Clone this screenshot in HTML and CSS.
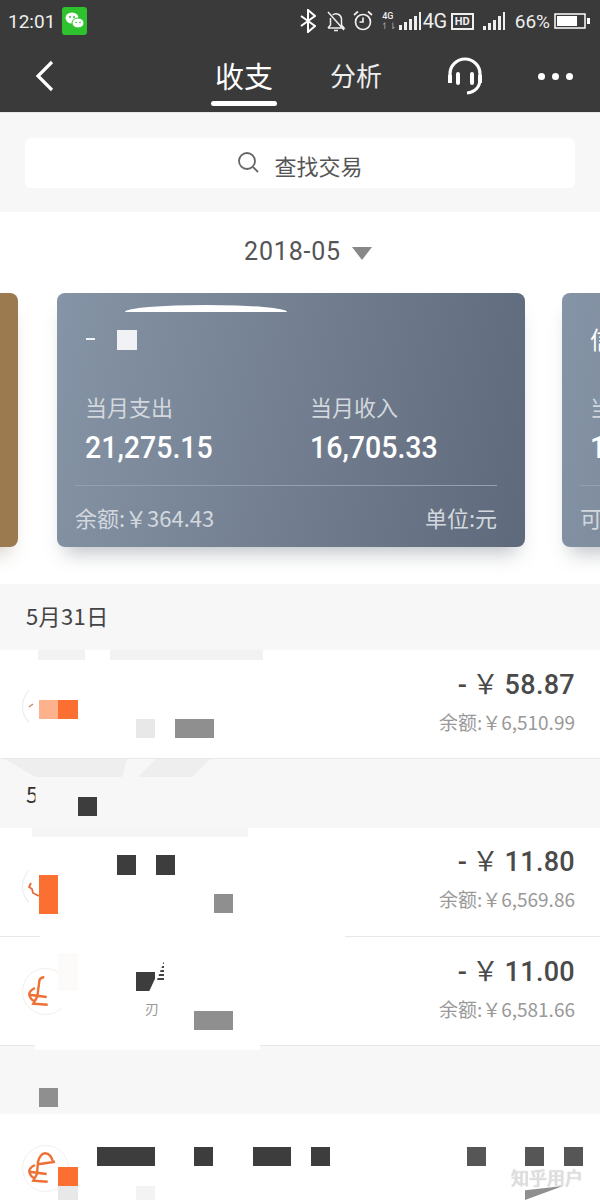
FILE: index.html
```html
<!DOCTYPE html>
<html lang="zh-CN">
<head>
  <meta charset="UTF-8">
  <title>收支</title>
  <link rel="stylesheet" href="styles.css">
</head>
<body>
  <div class="top">
    <div class="status">
      <span class="time">12:01</span>
      <svg class="wechat" width="25" height="28" viewBox="0 0 25 28">
        <rect width="25" height="28" rx="3" fill="#2fc22f"/>
        <ellipse cx="10" cy="11" rx="6.500" ry="5.500" fill="#fff"/>
        <ellipse cx="16" cy="16" rx="6" ry="5" fill="#fff" stroke="#2fc22f"/>
        <circle cx="8" cy="10" r="1" fill="#2fc22f"/><circle cx="12" cy="10" r="1" fill="#2fc22f"/>
        <circle cx="14" cy="15.500" r=".8" fill="#2fc22f"/><circle cx="18" cy="15.500" r=".8" fill="#2fc22f"/>
      </svg>
      <div class="status-right">
        <svg width="16" height="24" viewBox="0 0 16 24" fill="none" stroke="#fff" stroke-width="2"><path d="M1 7l14 10-7 6V1l7 6L1 17"/></svg>
        <svg class="ml10" width="20" height="24" viewBox="0 0 20 24" fill="none" stroke="#eee" stroke-width="1.500"><path d="M2 19h16l-2.500-3V10a5.500 5.500 0 0 0-9-4M4.500 9v7L2 19M8 21.500h4M2 3l16 18"/></svg>
        <svg class="ml7" width="20" height="24" viewBox="0 0 20 24" fill="none" stroke="#eee" stroke-width="1.700"><circle cx="10" cy="13" r="7.500"/><path d="M10 8.500V13h-3.500M1 6l4-3.500M19 6l-4-3.500"/></svg>
        <span class="net-small">4G<br><i>↿⇂</i></span>
        <svg width="22" height="24" viewBox="0 0 22 24" fill="#eee"><rect x="0" y="16" width="3" height="5"/><rect x="5" y="13" width="3" height="8"/><rect x="10" y="10" width="3" height="11"/><rect x="15" y="7" width="3" height="14"/><rect x="20" y="3" width="2" height="18"/></svg>
        <span class="net">4G</span>
        <span class="hd">HD</span>
        <svg class="ml9" width="22" height="24" viewBox="0 0 22 24" fill="#eee"><rect x="0" y="17" width="3" height="4"/><rect x="5" y="14" width="3" height="7"/><rect x="10" y="11" width="3" height="10"/><rect x="15" y="7" width="3" height="14"/><rect x="20" y="3" width="2" height="18"/></svg>
        <span class="pct">66%</span>
        <svg width="36" height="16" viewBox="0 0 36 16"><rect x="1" y="1" width="30" height="14" fill="none" stroke="#fff" stroke-width="1.500"/><rect x="3" y="3" width="20" height="10" fill="#fff"/><rect x="33" y="5" width="3" height="6" fill="#fff"/></svg>
      </div>
    </div>
    <div class="nav">
      <svg class="back" width="20" height="32" viewBox="0 0 20 32" fill="none" stroke="#fff" stroke-width="3.200"><path d="M17 2L3 16l14 14"/></svg>
      <div class="tab active">收支</div>
      <div class="tab">分析</div>
      <svg class="headset" width="36" height="38" viewBox="0 0 36 38" fill="none" stroke="#fff" stroke-width="3.200"><path d="M3 20V17a15 15 0 0 1 30 0v5c0 8-5 13-13 14"/><path d="M3 18v8M33 18v8" stroke-width="4"/><path d="M11 17v9M25 17v9" stroke-width="4" stroke-linecap="round"/></svg>
      <div class="dots"><b></b><b></b><b></b></div>
    </div>
  </div>

  <div class="search-wrap">
    <div class="search">
      <svg width="24" height="24" viewBox="0 0 24 24" fill="none" stroke="#666" stroke-width="1.800"><circle cx="10" cy="10" r="8"/><path d="M16 16l5 5"/></svg>
      <span>查找交易</span>
    </div>
  </div>

  <div class="month-area">
    <div class="month">2018-05<i class="caret"></i></div>
    <div class="cards">
      <div class="card brown"></div>
      <div class="card">
        <div class="smear"></div>
        <div class="card-name"><span class="dash"></span><span class="card-sq"></span></div>
        <div class="totals">
          <div class="col"><label>当月支出</label><strong>21,275.15</strong></div>
          <div class="col"><label>当月收入</label><strong>16,705.33</strong></div>
        </div>
        <div class="card-foot"><span>余额:￥364.43</span><span>单位:元</span></div>
      </div>
      <div class="card">
        <div class="card-name name-right">信</div>
        <div class="totals">
          <div class="col"><label>当月支出</label><strong>16,705.33</strong></div>
        </div>
        <div class="card-foot"><span>可用额度</span></div>
      </div>
    </div>
  </div>

  <div class="day">5月31日<i class="patch p-a"></i><i class="patch p-b"></i></div>
  <div class="row">
    <div class="logo faint logo-a">
      <svg width="47" height="47" viewBox="0 0 47 47" fill="none" stroke="#c98a63" stroke-width="1.500"><path d="M7 24l4-3"/></svg>
    </div>
    <i class="mos peach m1"></i><i class="mos orange m2"></i><i class="mos pale m3"></i><i class="mos grey m4"></i>
    <div class="money"><div class="amount"><em>-</em><em>￥</em>58.87</div><div class="bal">余额:￥6,510.99</div></div>
  </div>
  <div class="day day2"><span class="clip5">5</span><i class="mos dark m5"></i><i class="patch p-c"></i><i class="patch p-d"></i></div>
  <div class="row row-wiped">
    <i class="patch p-e"></i>
    <div class="logo faint logo-b">
      <svg width="47" height="47" viewBox="0 0 47 47" fill="none" stroke="#e8683a" stroke-width="1.800"><path d="M9 20l-2 4 3 2 1 4 6 3"/></svg>
    </div>
    <i class="mos dark m6"></i><i class="mos dark m7"></i><i class="mos orange m8"></i><i class="mos grey m9"></i>
    <div class="money"><div class="amount"><em>-</em><em>￥</em>11.80</div><div class="bal">余额:￥6,569.86</div></div>
    <i class="wipe wipe-b"></i>
  </div>
  <div class="row">
    <div class="logo half">
      <svg width="47" height="47" viewBox="0 0 47 47" fill="none" stroke="#ee7035" stroke-width="2.400"><path d="M22.300 9c-3 .5-5 2-5 4.500l-2 15-4 7.200 14.400 1M13 20c-4 2-6 4.500-5.700 6.700.3 3 3 6 5.700 6.700M7.300 26.700l17.400 2.300"/></svg>
    </div>
    <i class="mos ghost m23"></i>
    <i class="mos dark m10 cut"></i><i class="mos grey m11"></i>
    <i class="hatch"></i><span class="frag">刃</span>
    <div class="money"><div class="amount"><em>-</em><em>￥</em>11.00</div><div class="bal">余额:￥6,581.66</div></div>
    <i class="wipe"></i>
  </div>
  <div class="day day3"><i class="mos grey m12"></i></div>
  <div class="row last">
    <div class="logo">
      <svg width="47" height="47" viewBox="0 0 47 47" fill="none" stroke="#ee7035" stroke-width="2.400"><path d="M15 29l1-12c1-5 4-8.700 7-8.700 4 0 7 4 8.300 10M16.300 19.300L33 16.700M15 29l-3.700 6.700 14.400 1M13 20c-4 2-6 4.500-5.700 6.700.3 3 3 6 5.700 6.700M7.300 26.700l17.400 2.300"/></svg>
    </div>
    <i class="mos dark m13"></i><i class="mos dark m14"></i><i class="mos dark m15"></i><i class="mos dark m16"></i>
    <i class="mos mid m17"></i><i class="mos mid m18"></i><i class="mos mid m19"></i>
    <i class="mos orange m20"></i><i class="mos pale m21"></i><i class="mos paler m22"></i><i class="wedge"></i>
    <span class="mark">知乎用户</span>
  </div>
</body>
</html>
```

FILE: styles.css
```css
* {
  box-sizing: border-box;
}
html, body {
  margin: 0;
  padding: 0;
}
body {
  width: 600px;
  height: 1200px;
  overflow: hidden;
  background-color: #fff;
  font-family: "Noto Sans CJK SC", "Liberation Sans", sans-serif;
  color: #444;
}
i, em {
  font-style: normal;
}

.top {
  height: 113px;
  background-color: #3a3a3a;
  color: #fff;
  border-bottom: 1px solid #e8e8e8;
}
.status {
  height: 40px;
  display: flex;
  align-items: center;
  padding: 2px 10px 0 8px;
}
.time {
  font-family: "Roboto", sans-serif;
  font-size: 19px;
  color: #eee;
}
.wechat {
  margin-left: 7px;
}
.status-right {
  margin-left: auto;
  display: flex;
  align-items: center;
  font-family: "Roboto", sans-serif;
  color: #eee;
}
.ml10 {
  margin-left: 10px;
}
.ml7 {
  margin-left: 7px;
}
.ml9 {
  margin-left: 9px;
}
.net-small {
  width: 14px;
  margin: 0 4px 0 8px;
  font-size: 9px;
  line-height: 10px;
  text-align: center;
  font-weight: 500;
}
.net-small i {
  color: #aaa;
}
.net {
  margin-left: 2px;
  font-size: 20px;
  letter-spacing: -0.5px;
}
.hd {
  margin-left: 4px;
  width: 23px;
  height: 17px;
  border: 2px solid #eee;
  font-size: 11px;
  font-weight: 700;
  line-height: 13px;
  text-align: center;
}
.pct {
  margin: 0 4px 0 10px;
  font-size: 19px;
}

.nav {
  height: 72px;
  display: flex;
  align-items: flex-start;
  padding-left: 35px;
}
.back {
  margin-top: 20px;
}
.tab {
  position: relative;
  margin-top: 14px;
  font-size: 26px;
  line-height: 42px;
  margin-left: 57px;
  color: #eee;
}
.tab.active {
  margin-left: 160px;
  font-size: 29px;
  color: #fff;
}
.tab.active::after {
  content: "";
  position: absolute;
  left: -4px;
  right: -4px;
  top: 47px;
  height: 5px;
  border-radius: 3px;
  background-color: #fff;
}
.headset {
  margin: 17px 0 0 65px;
}
.dots {
  margin: 33px 0 0 55px;
  display: flex;
  gap: 7px;
}
.dots b {
  width: 7px;
  height: 7px;
  border-radius: 50%;
  background-color: #fff;
}

.search-wrap {
  height: 99px;
  padding: 25px 25px 0;
  background-color: #f7f7f7;
}
.search {
  height: 50px;
  border-radius: 6px;
  background-color: #fff;
  display: flex;
  align-items: center;
  justify-content: center;
  gap: 13px;
  font-size: 22px;
  color: #555;
  padding-top: 3px;
}
.search svg {
  margin-top: -3px;
}

.month-area {
  height: 372px;
  background-color: #fff;
  overflow: hidden;
}
.month {
  height: 81px;
  padding: 0 0 3px 16px;
  display: flex;
  justify-content: center;
  align-items: center;
  font-family: "Roboto", sans-serif;
  font-size: 25px;
  letter-spacing: 0.8px;
  color: #555;
}
.caret {
  margin: 4px 0 0 11px;
  border-left: 10px solid transparent;
  border-right: 10px solid transparent;
  border-top: 13px solid #888;
}
.cards {
  display: flex;
  gap: 37px;
  margin-left: -450px;
  height: 290px;
}
.card {
  position: relative;
  flex: none;
  width: 468px;
  height: 254px;
  padding: 0 28px 0 18px;
  border-radius: 8px;
  color: #fff;
  background: linear-gradient(100deg, #8594a6 0%, #737f90 50%, #5e6a7b 100%);
  box-shadow: 0 14px 18px -8px rgba(70, 80, 95, 0.35);
}
.card.brown {
  margin-right: 2px;
  background: linear-gradient(90deg, #a5845c, #9b7a50);
  box-shadow: 0 14px 18px -8px rgba(110, 90, 60, 0.3);
}
.smear {
  position: absolute;
  left: 68px;
  top: 12px;
  width: 162px;
  height: 7px;
  background-color: #fff;
  border-radius: 50% 50% 0 0 / 100% 100% 0 0;
}
.card-name {
  height: 94px;
  padding: 37px 0 0 11px;
  display: flex;
  align-items: flex-start;
}
.name-right {
  font-size: 24px;
  padding-top: 28px;
  padding-left: 10px;
}
.dash {
  width: 9px;
  height: 2px;
  margin-top: 8px;
  background-color: #f0f2f5;
}
.card-sq {
  width: 20px;
  height: 20px;
  margin: 0 0 0 22px;
  background-color: #f0f2f5;
}
.totals {
  display: flex;
  height: 99px;
  padding-left: 10px;
  border-bottom: 1px solid #93a0b0;
}
.col {
  width: 225px;
  flex: none;
}
.col label {
  display: block;
  font-size: 22px;
  line-height: 30px;
  margin-top: 4px;
  color: #d3d8de;
}
.col strong {
  display: block;
  font-family: "Roboto", sans-serif;
  font-weight: 500;
  font-size: 31px;
  line-height: 40px;
  margin-top: 7px;
  color: #fff;
  transform: scaleX(0.92);
  transform-origin: left center;
}
.card-foot {
  display: flex;
  justify-content: space-between;
  padding-top: 15px;
  font-size: 22px;
  line-height: 32px;
  color: #d3d8de;
}

.day {
  position: relative;
  height: 66px;
  padding: 14px 0 0 26px;
  background-color: #f7f7f7;
  font-size: 22px;
  line-height: 34px;
  letter-spacing: 0.4px;
  color: #444;
}
.day2 {
  height: 69px;
  overflow: hidden;
}
.day3 {
  height: 68px;
}
.clip5 {
  position: absolute;
  left: 26px;
  top: 17px;
  clip-path: inset(0 25% 0 0);
  color: #333;
}
.patch {
  position: absolute;
  background-color: #f2f2f2;
}
.p-a {
  left: 38px;
  top: 66px;
  width: 47px;
  height: 10px;
  z-index: 1;
}
.p-b {
  left: 110px;
  top: 66px;
  width: 153px;
  height: 10px;
  z-index: 1;
}
.p-c {
  left: 5px;
  top: 0;
  width: 122px;
  height: 18px;
  background-color: #eeeeee;
  clip-path: polygon(0 0, 100% 0, 96% 100%, 25% 100%);
}
.p-d {
  left: 138px;
  top: 0;
  width: 72px;
  height: 18px;
  background-color: #eeeeee;
  clip-path: polygon(25% 0, 100% 0, 75% 100%, 0 100%);
}
.p-e {
  left: 32px;
  top: 0;
  width: 216px;
  height: 9px;
  background-color: #f5f5f5;
}

.row {
  position: relative;
  height: 109px;
  background-color: #fff;
  border-bottom: 1px solid #e8e8e8;
}
.row.last {
  height: 86px;
  border-bottom: 0;
}
.logo {
  position: absolute;
  left: 22px;
  top: 31px;
  width: 47px;
  height: 47px;
  border-radius: 50%;
  border: 1px solid #f2f0ee;
}
.logo svg {
  display: block;
  margin: -1px;
}
.logo.faint {
  border-color: transparent;
  border-left-color: #e6ecf2;
}
.logo-a {
  top: 33px;
}
.logo-b {
  top: 35px;
}
.logo.half {
  border-right-color: transparent;
  border-top-color: #f2f0ee;
}
.money {
  position: absolute;
  right: 25px;
  top: 15px;
  text-align: right;
}
.row-wiped .money {
  top: 14px;
}
.amount {
  font-family: "Roboto", sans-serif;
  font-weight: 500;
  font-size: 27px;
  line-height: 40px;
  letter-spacing: 0.3px;
  color: #4a4a4a;
  display: flex;
  justify-content: flex-end;
  align-items: center;
}
.amount em {
  margin-right: 5px;
}
.bal {
  margin-top: 1px;
  font-size: 19px;
  line-height: 32px;
  color: #999;
}
.wipe {
  position: absolute;
  left: 35px;
  right: 340px;
  bottom: -5px;
  height: 5px;
  background-color: #fff;
  z-index: 1;
}
.wipe-b {
  left: 40px;
  right: 255px;
  bottom: -1px;
  height: 1px;
}

/* mosaic blocks covering private details */
.mos {
  position: absolute;
  display: block;
}
.peach {
  background-color: #fdb18d;
}
.orange {
  background-color: #fb7030;
}
.pale {
  background-color: #e8e8e8;
}
.paler {
  background-color: #f3f3f3;
}
.ghost {
  background-color: #fdfbf9;
}
.grey {
  background-color: #8f8f8f;
}
.dark {
  background-color: #3d3d3d;
}
.mid {
  background-color: #565656;
}
.cut {
  clip-path: polygon(0 0, 100% 0, 100% 35%, 70% 100%, 0 100%);
}
.hatch {
  position: absolute;
  left: 157px;
  top: 24px;
  width: 7px;
  height: 19px;
  background: repeating-linear-gradient(0deg, #444 0 2px, transparent 2px 4px);
  clip-path: polygon(100% 0, 100% 100%, 0 100%);
}
.frag {
  position: absolute;
  left: 145px;
  top: 62px;
  font-size: 14px;
  line-height: 18px;
  color: #999;
}
.m1 { left: 39px; top: 50px; width: 19px; height: 19px; }
.m2 { left: 58px; top: 50px; width: 20px; height: 19px; }
.m3 { left: 136px; top: 69px; width: 19px; height: 19px; }
.m4 { left: 175px; top: 69px; width: 39px; height: 19px; }
.m5 { left: 78px; top: 38px; width: 19px; height: 19px; }
.m6 { left: 117px; top: 27px; width: 19px; height: 20px; }
.m7 { left: 156px; top: 27px; width: 19px; height: 20px; }
.m8 { left: 39px; top: 47px; width: 19px; height: 39px; }
.m9 { left: 214px; top: 66px; width: 19px; height: 19px; }
.m10 { left: 136px; top: 35px; width: 19px; height: 19px; }
.m11 { left: 194px; top: 74px; width: 39px; height: 19px; }
.m12 { left: 39px; top: 42px; width: 19px; height: 19px; }
.m13 { left: 97px; top: 33px; width: 58px; height: 19px; }
.m14 { left: 194px; top: 33px; width: 19px; height: 19px; }
.m15 { left: 253px; top: 33px; width: 38px; height: 19px; }
.m16 { left: 311px; top: 33px; width: 19px; height: 19px; }
.m17 { left: 467px; top: 33px; width: 19px; height: 19px; }
.m18 { left: 525px; top: 33px; width: 19px; height: 19px; }
.m19 { left: 564px; top: 33px; width: 19px; height: 19px; }
.m20 { left: 58px; top: 53px; width: 20px; height: 19px; }
.m21 { left: 58px; top: 72px; width: 20px; height: 14px; }
.m22 { left: 136px; top: 72px; width: 19px; height: 14px; }
.m23 { left: 58px; top: 16px; width: 20px; height: 38px; }
.wedge {
  position: absolute;
  left: 525px;
  top: 72px;
  width: 38px;
  height: 14px;
  background-color: #8f8f8f;
  clip-path: polygon(0 30%, 100% 0, 0 100%);
}
.mark {
  position: absolute;
  right: 17px;
  top: 50px;
  font-size: 18px;
  line-height: 26px;
  color: #e2e2e2;
  text-shadow: 0 0 1px #aaa;
}
```
